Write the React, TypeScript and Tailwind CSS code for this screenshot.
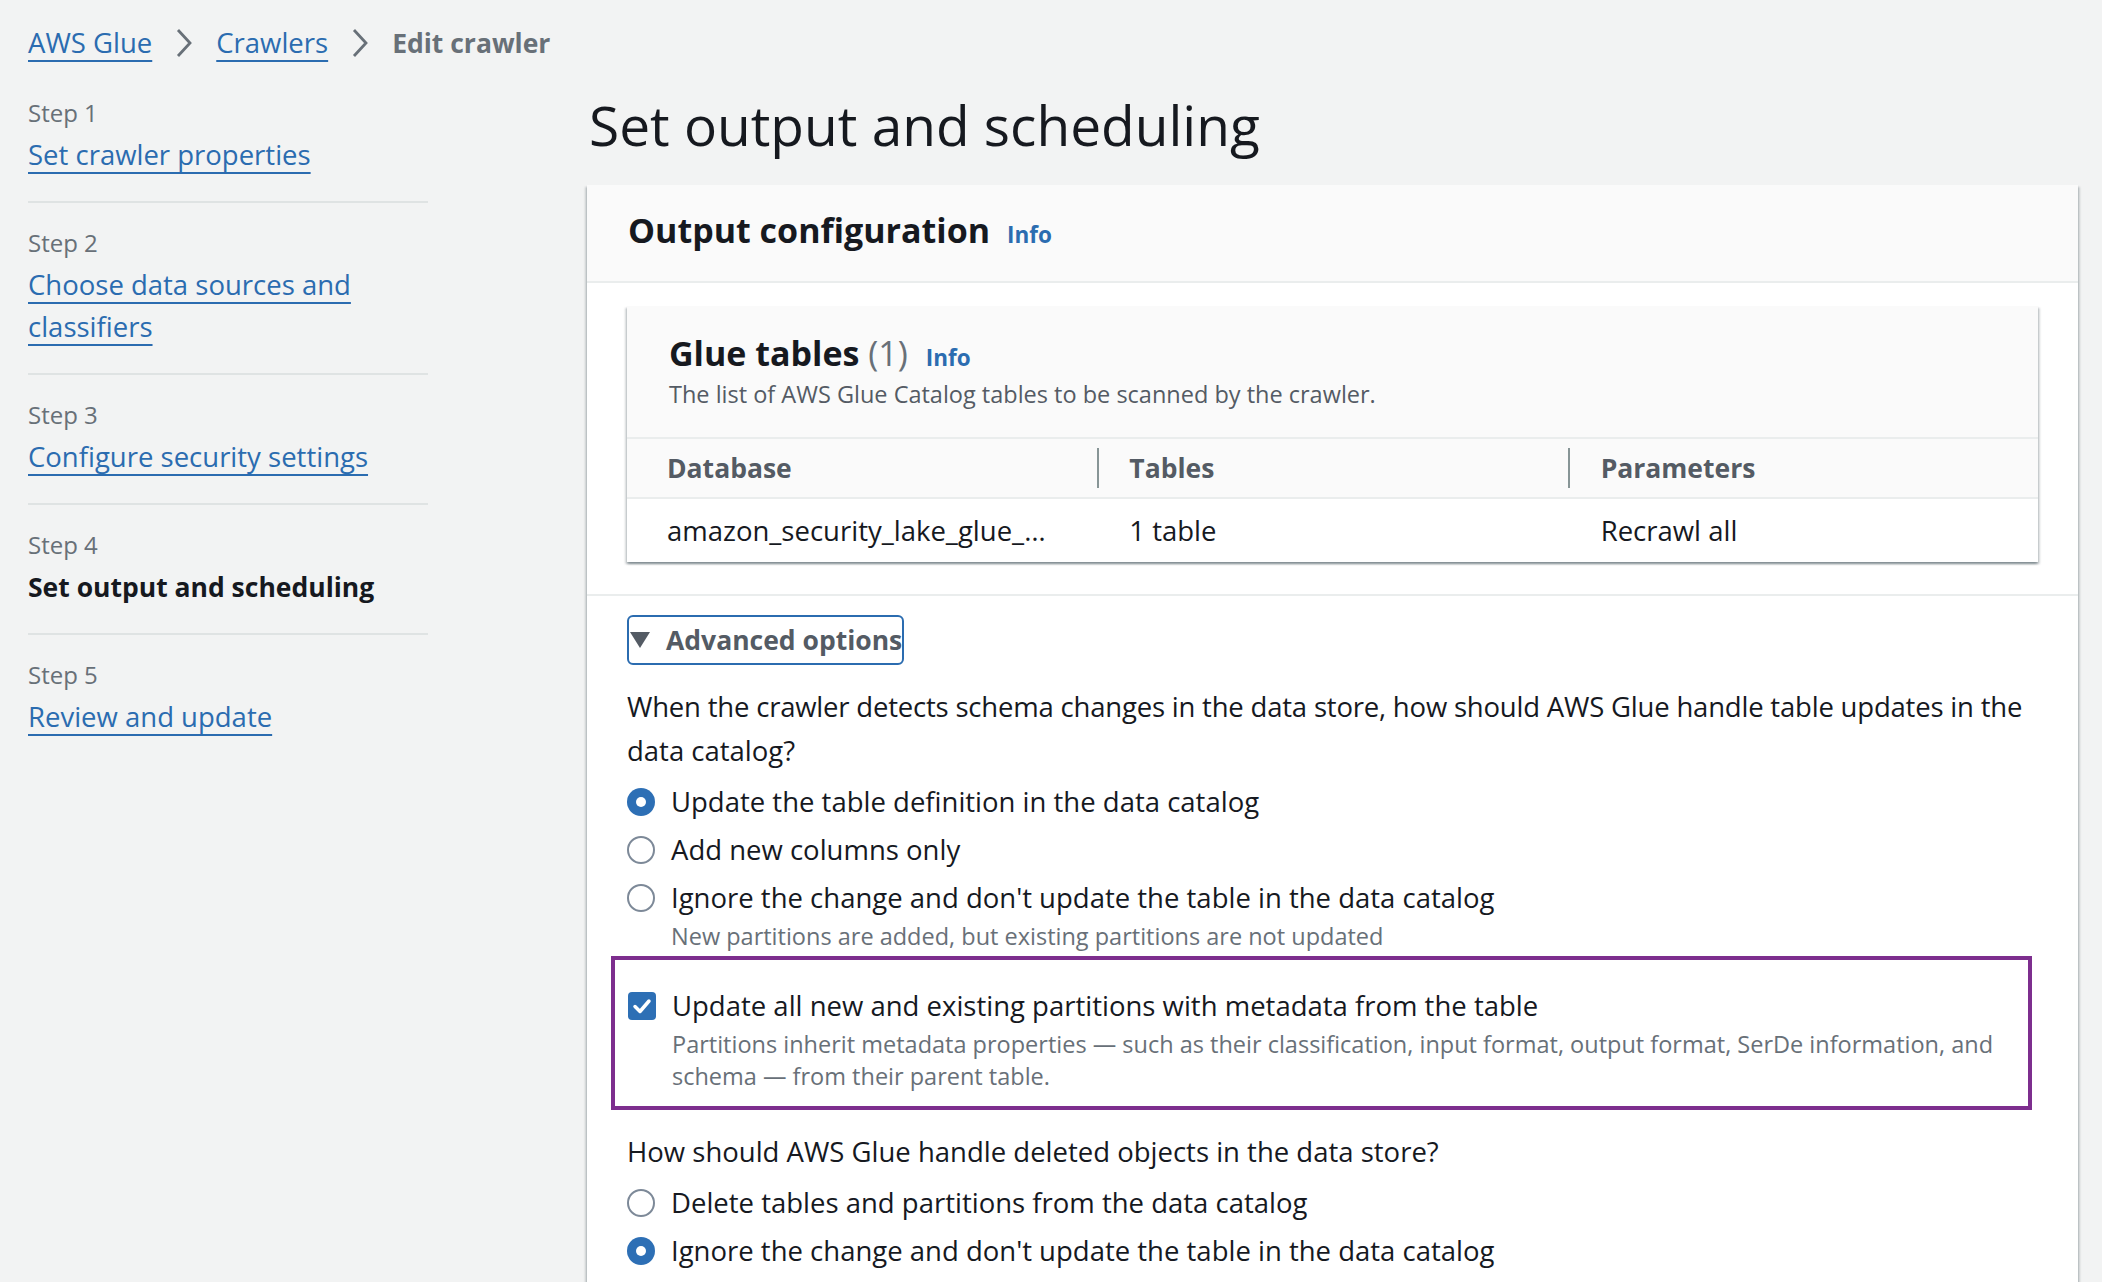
const LINK = 'text-[#2b6cb0] underline decoration-[2px] underline-offset-[7px]';

const STEPS = [
  { label: 'Set crawler properties', current: false },
  { label: 'Choose data sources and classifiers', current: false },
  { label: 'Configure security settings', current: false },
  { label: 'Set output and scheduling', current: true },
  { label: 'Review and update', current: false },
];

function Chevron() {
  return (
    <svg width="20" height="30" viewBox="0 0 20 30" className="mx-[22px] shrink-0">
      <polyline points="4,2 16,15 4,28" fill="none" stroke="#687078" strokeWidth="2.8" />
    </svg>
  );
}

function Radio({ checked }: { checked?: boolean }) {
  return (
    <svg width="28" height="28" viewBox="0 0 28 28" className="mt-[6px] shrink-0">
      {checked ? (
        <>
          <circle cx="14" cy="14" r="14" fill="#2d6fb5" />
          <circle cx="14" cy="14" r="5" fill="#ffffff" />
        </>
      ) : (
        <circle cx="14" cy="14" r="13" fill="#ffffff" stroke="#7d8998" strokeWidth="2" />
      )}
    </svg>
  );
}

function Option({ checked, label, desc }: { checked?: boolean; label: string; desc?: string }) {
  return (
    <div className="flex gap-[16px]">
      <Radio checked={checked} />
      <div>
        <div>{label}</div>
        {desc && <div className="mt-[2px] text-[23.5px] leading-[32px] text-[#687078]">{desc}</div>}
      </div>
    </div>
  );
}

export default function App() {
  return (
    <div className="min-h-screen bg-[#f2f3f3] text-[#16191f] font-['Open_Sans',sans-serif] text-[27.5px] leading-[40px]">
      <div className="pl-[28px] pr-[24px] pt-[23px]">
        {/* Breadcrumbs */}
        <nav className="flex items-center h-[40px]">
          <a className={LINK}>AWS Glue</a>
          <Chevron />
          <a className={LINK}>Crawlers</a>
          <Chevron />
          <span className="font-bold text-[26.5px] text-[#687078]">Edit crawler</span>
        </nav>

        <div className="flex mt-[34px]">
          {/* Wizard steps */}
          <ul className="w-[400px] shrink-0">
            {STEPS.map((s, i) => (
              <li
                key={s.label}
                className={`${i > 0 ? 'pt-[24px]' : ''} ${i < STEPS.length - 1 ? 'pb-[25px] border-b-2 border-[#dfe3e3]' : ''}`}
              >
                <div className="text-[24px] leading-[32px] text-[#687078]">Step {i + 1}</div>
                <div className="mt-[5px] leading-[42px] pr-[30px]">
                  {s.current ? (
                    <span className="font-bold text-[26.5px] whitespace-nowrap">{s.label}</span>
                  ) : (
                    <a className={LINK}>{s.label}</a>
                  )}
                </div>
              </li>
            ))}
          </ul>

          {/* Main */}
          <div className="flex-1 ml-[159px]">
            <h1 className="text-[55px] leading-[58px] font-normal pl-[2px] -mt-[1px]">Set output and scheduling</h1>

            <div className="mt-[31px] bg-white shadow-[0_2px_2px_0_rgba(0,28,36,0.3),2px_2px_2px_0_rgba(0,28,36,0.15),-2px_2px_2px_0_rgba(0,28,36,0.15)]">
              <div className="bg-[#fafafa] border-b-2 border-[#eaeded] pl-[41px] pt-[23px] pb-[26px] flex items-baseline">
                <h2 className="text-[34px] leading-[44px] font-bold">Output configuration</h2>
                <a className="ml-[17px] text-[22.5px] font-bold text-[#2b6cb0]">Info</a>
              </div>

              {/* Glue tables */}
              <div className="px-[40px] pt-[23px] pb-[32px] border-b-2 border-[#eaeded]">
                <div className="bg-white shadow-[0_2px_2px_0_rgba(0,28,36,0.3),2px_2px_2px_0_rgba(0,28,36,0.15),-2px_2px_2px_0_rgba(0,28,36,0.15)]">
                  <div className="bg-[#fafafa] pl-[42px] pt-[25px] pb-[27px] border-b-2 border-[#eaeded]">
                    <div className="flex items-baseline">
                      <h2 className="text-[34px] leading-[44px] font-bold">
                        Glue tables <span className="font-normal text-[#687078]">(1)</span>
                      </h2>
                      <a className="ml-[18px] text-[22.5px] font-bold text-[#2b6cb0]">Info</a>
                    </div>
                    <p className="text-[23.5px] leading-[32px] text-[#545b64]">
                      The list of AWS Glue Catalog tables to be scanned by the crawler.
                    </p>
                  </div>
                  <div className="grid grid-cols-3 h-[60px] bg-[#fafafa] border-b-2 border-[#eaeded] font-bold text-[26.5px] text-[#545b64]">
                    <div className="flex items-center pl-[40px]">Database</div>
                    <div className="flex items-center">
                      <span className="w-[2px] h-[40px] bg-[#879596]" />
                      <span className="ml-[30px]">Tables</span>
                    </div>
                    <div className="flex items-center">
                      <span className="w-[2px] h-[40px] bg-[#879596]" />
                      <span className="ml-[31px]">Parameters</span>
                    </div>
                  </div>
                  <div className="grid grid-cols-3 h-[63px] items-center">
                    <div className="pl-[40px]">amazon_security_lake_glue_…</div>
                    <div className="pl-[32px]">1 table</div>
                    <div className="pl-[33px]">Recrawl all</div>
                  </div>
                </div>
              </div>

              {/* Advanced options */}
              <div className="px-[40px] pt-[19px] pb-[40px]">
                <div className="inline-flex items-center h-[50px] border-2 border-[#2b6cb0] rounded-[6px] pl-[1px]">
                  <svg width="20" height="16" viewBox="0 0 20 16" className="shrink-0">
                    <polygon points="0,0 20,0 10,16" fill="#545b64" />
                  </svg>
                  <span className="ml-[16px] font-bold text-[26.5px] text-[#545b64]">Advanced options</span>
                </div>

                <p className="mt-[20px] leading-[44px]">
                  <span className="whitespace-nowrap tracking-[-0.2px]">
                    When the crawler detects schema changes in the data store, how should AWS Glue handle table updates in the
                  </span>
                  <br />
                  data catalog?
                </p>

                <div className="mt-[9px] flex flex-col gap-[8px]">
                  <Option checked label="Update the table definition in the data catalog" />
                  <Option label="Add new columns only" />
                  <Option
                    label="Ignore the change and don't update the table in the data catalog"
                    desc="New partitions are added, but existing partitions are not updated"
                  />
                </div>

                <div className="mt-[4px] -ml-[16px] mr-[6px] border-4 border-[#7d2e8e] pt-[26px] pb-[14px] pl-[13px]">
                  <div className="flex gap-[16px]">
                    <svg width="28" height="28" viewBox="0 0 28 28" className="mt-[6px] shrink-0">
                      <rect width="28" height="28" rx="4" fill="#2d6fb5" />
                      <polyline points="7,14.5 12,19.5 21,9" fill="none" stroke="#ffffff" strokeWidth="3.5" strokeLinecap="round" strokeLinejoin="round" />
                    </svg>
                    <div>
                      <div>Update all new and existing partitions with metadata from the table</div>
                      <div className="mt-[2px] text-[23.5px] leading-[32px] text-[#687078]">
                        Partitions inherit metadata properties — such as their classification, input format, output format, SerDe information, and
                        <br />
                        schema — from their parent table.
                      </div>
                    </div>
                  </div>
                </div>

                <p className="mt-[22px]">How should AWS Glue handle deleted objects in the data store?</p>
                <div className="mt-[11px] flex flex-col gap-[8px]">
                  <Option label="Delete tables and partitions from the data catalog" />
                  <Option checked label="Ignore the change and don't update the table in the data catalog" />
                </div>
              </div>
            </div>
          </div>
        </div>
      </div>
    </div>
  );
}
